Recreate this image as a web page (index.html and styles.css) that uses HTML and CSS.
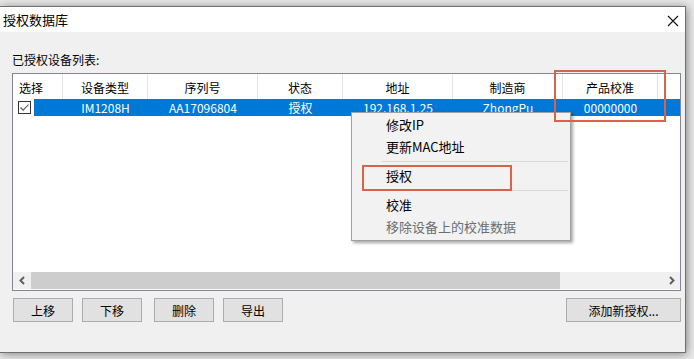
FILE: index.html
```html
<!DOCTYPE html>
<html lang="zh-CN">
<head>
  <meta charset="UTF-8">
  <title>授权数据库</title>
  <link rel="stylesheet" href="styles.css">
</head>
<body>
  <div class="desk">
    <div class="window">
      <div class="titlebar">
        <span class="title">授权数据库</span>
        <svg class="close" width="12" height="12" viewBox="0 0 12 12"><path d="M1 1L11 11M11 1L1 11" stroke="#111" stroke-width="1.1"/></svg>
      </div>

      <div class="content">
        <div class="caption">已授权设备列表:</div>

        <div class="listbox">
          <div class="list-head">
            <div class="hcell">选择</div>
            <div class="hcell">设备类型</div>
            <div class="hcell">序列号</div>
            <div class="hcell">状态</div>
            <div class="hcell">地址</div>
            <div class="hcell">制造商</div>
            <div class="hcell">产品校准</div>
            <div class="hcell last"></div>
          </div>
          <div class="list-row selected">
            <div class="cell check-cell">
              <span class="checkbox">
                <svg width="11" height="11" viewBox="0 0 11 11"><path d="M1.5 5.5L4.2 8.2L9.5 2.5" fill="none" stroke="#555" stroke-width="1.1"/></svg>
              </span>
            </div>
            <div class="cell">IM1208H</div>
            <div class="cell">AA17096804</div>
            <div class="cell">授权</div>
            <div class="cell">192.168.1.25</div>
            <div class="cell">ZhongPu</div>
            <div class="cell">00000000</div>
            <div class="cell"></div>
          </div>
          <div class="list-fill"></div>
          <div class="hscroll">
            <div class="arrow">
              <svg width="8" height="9" viewBox="0 0 8 9"><path d="M6 1L2.5 4.5L6 8" fill="none" stroke="#606060" stroke-width="2"/></svg>
            </div>
            <div class="thumb"></div>
            <div class="track"></div>
            <div class="arrow">
              <svg width="8" height="9" viewBox="0 0 8 9"><path d="M2 1L5.5 4.5L2 8" fill="none" stroke="#606060" stroke-width="2"/></svg>
            </div>
          </div>
        </div>

        <div class="buttons">
          <button class="btn">上移</button>
          <button class="btn">下移</button>
          <button class="btn btn-delete">删除</button>
          <button class="btn">导出</button>
          <button class="btn btn-add">添加新授权...</button>
        </div>
      </div>
    </div>

    <div class="ctx-menu">
      <div class="menu-item">修改IP</div>
      <div class="menu-item">更新MAC地址</div>
      <div class="menu-sep"></div>
      <div class="menu-item">授权</div>
      <div class="menu-sep"></div>
      <div class="menu-item">校准</div>
      <div class="menu-item disabled">移除设备上的校准数据</div>
    </div>

    <div class="mark mark-column"></div>
    <div class="mark mark-item"></div>
  </div>
</body>
</html>
```

FILE: styles.css
```css
/* Global */
body {
  margin: 0;
  padding: 0;
  background: #ffffff;
  font-family: "Noto Sans CJK SC", "Noto Sans", sans-serif;
  font-size: 12px;
  color: #000;
}

.desk {
  position: relative;
  width: 694px;
  height: 359px;
  overflow: hidden;
  background: #e9e9e9;
}

/* Dialog window */
.window {
  margin-top: 6px;
  width: 685px;
  height: 345px;
  background: #f0f0f0;
  border: 1px solid #6f6f6f;
  border-left: none;
  box-shadow: 1px 1px 9px rgba(0, 0, 0, 0.45);
  display: flex;
  flex-direction: column;
}

.titlebar {
  height: 25px;
  background: #ffffff;
  display: flex;
  align-items: center;
  justify-content: space-between;
  padding: 0 6px 0 3px;
}

.title {
  font-size: 13px;
  line-height: 16px;
  margin-top: 1px;
}

.close {
  display: block;
  margin-top: 2px;
}

.content {
  flex: 1;
  display: flex;
  flex-direction: column;
  padding: 20px 4px 0 12px;
}

.caption {
  line-height: 16px;
  margin-bottom: 5px;
}

/* List view */
.listbox {
  height: 216px;
  border: 1px solid #828790;
  background: #ffffff;
  display: flex;
  flex-direction: column;
}

.list-head,
.list-row {
  display: grid;
  grid-template-columns: 50px 85px 110px 85px 110px 110px 95px 1fr;
}

.list-head {
  height: 25px;
}

.hcell {
  display: flex;
  align-items: center;
  justify-content: center;
  border-right: 1px solid #e5e5e5;
  line-height: 16px;
  padding-top: 2px;
}

.hcell:first-child {
  justify-content: flex-start;
  padding-left: 6px;
}

.hcell.last {
  border-right: none;
}

.list-row {
  height: 17px;
}

.cell {
  display: flex;
  align-items: center;
  justify-content: center;
  line-height: 16px;
  white-space: nowrap;
}

.list-row.selected .cell {
  background: #0078d7;
  color: #ffffff;
}

.list-row.selected .check-cell {
  background: linear-gradient(to right, #ffffff 21px, #0078d7 21px);
  justify-content: flex-start;
  padding-left: 5px;
}

.checkbox {
  width: 11px;
  height: 11px;
  border: 1px solid #333333;
  background: #ffffff;
  display: flex;
}

.list-fill {
  flex: 1;
}

/* Horizontal scrollbar */
.hscroll {
  height: 17px;
  background: #f0f0f0;
  display: flex;
  margin-bottom: 1px;
}

.arrow {
  width: 17px;
  display: flex;
  align-items: center;
  justify-content: center;
}

.thumb {
  width: 529px;
  background: #cdcdcd;
  margin: 0 0 0 1px;
}

.track {
  flex: 1;
}

/* Buttons */
.buttons {
  display: flex;
  gap: 9px;
  margin-top: 7px;
  padding-left: 1px;
}

.btn {
  width: 60px;
  height: 24px;
  padding: 0;
  border: 1px solid #adadad;
  background: #e1e1e1;
  font-family: inherit;
  font-size: 12px;
  color: #000;
}

.btn-delete {
  margin-left: 3px;
}

.btn-add {
  width: 115px;
  margin-left: auto;
}

/* Context menu */
.ctx-menu {
  position: absolute;
  left: 351px;
  top: 112px;
  width: 218px;
  padding: 1px 0 2px;
  background: #f2f2f2;
  border: 1px solid #a0a0a0;
  box-shadow: 2px 2px 3px rgba(0, 0, 0, 0.35);
  font-size: 13px;
}

.menu-item {
  height: 22px;
  line-height: 22px;
  padding-left: 34px;
}

.menu-item.disabled {
  color: #6d6d6d;
}

.menu-sep {
  height: 1px;
  background: #d7d7d7;
  margin: 3px 2px 3px 30px;
}

/* Red annotation frames */
.mark {
  position: absolute;
  border: 2px solid #d9634a;
}

.mark-column {
  left: 554px;
  top: 70px;
  width: 108px;
  height: 48px;
}

.mark-item {
  left: 362px;
  top: 165px;
  width: 146px;
  height: 22px;
}
```
